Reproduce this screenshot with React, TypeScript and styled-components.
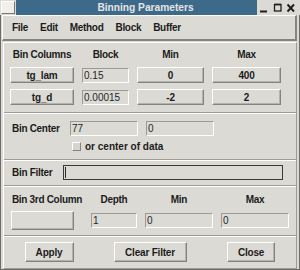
import React from "react";
import styled, { createGlobalStyle } from "styled-components";

const face = "#dcdad5";
const shade = "#9d9b96";
const deep = "#85837f";
const hilite = "#ffffff";
const ink = "#1c1c1c";

const GlobalStyle = createGlobalStyle`
  html, body { margin: 0; padding: 0; background: ${face}; }
  * { box-sizing: border-box; }
`;

const Window = styled.div`
  width: 300px;
  height: 270px;
  display: flex;
  flex-direction: column;
  background: ${face};
  color: ${ink};
  font-family: "Liberation Sans", Arial, sans-serif;
  font-size: 10px;
  font-weight: bold;
  overflow: hidden;
`;

const TitleBar = styled.div`
  height: 15px;
  flex-shrink: 0;
  display: flex;
`;

const SysBox = styled.div`
  width: 16px;
  display: flex;
  align-items: center;
  justify-content: center;
  &::after {
    content: "";
    width: 12px;
    height: 11px;
    background: #f0efec;
    border: 1px solid;
    border-color: ${hilite} #7a7874 #7a7874 ${hilite};
  }
`;

const Title = styled.div`
  flex: 1;
  background: #3e6a8a;
  color: #e4e4e4;
  font-size: 10.2px;
  line-height: 15px;
  text-align: center;
  padding-left: 18px;
  white-space: nowrap;
`;

const Controls = styled.svg`
  width: 43px;
  height: 15px;
  flex-shrink: 0;
`;

const Client = styled.div`
  flex: 1;
  display: flex;
  flex-direction: column;
  border: 1px solid #6e6c68;
  border-top: none;
  padding: 0 2px 0 1px;
`;

const MenuBar = styled.div`
  height: 26px;
  flex-shrink: 0;
  display: flex;
  align-items: center;
  gap: 12px;
  padding-left: 9px;
  border-style: solid;
  border-color: ${hilite} ${deep} ${deep} ${hilite};
  border-width: 1px 2px 2px 1px;
  letter-spacing: -0.3px;
`;

const MenuItem = styled.span`
  cursor: default;
`;

const Frame = styled.div`
  flex: 1;
  margin: 1px 0 0 1px;
  display: flex;
  flex-direction: column;
  border: 1px solid;
  border-color: ${hilite} ${shade} ${shade} ${hilite};
`;

const Groove = styled.div`
  height: 2px;
  flex-shrink: 0;
  border-top: 1px solid ${shade};
  border-bottom: 1px solid ${hilite};
`;

const ColumnsGrid = styled.div`
  display: grid;
  grid-template-columns: 64px 47px 67px 69px;
  grid-template-rows: 13px 16px 16px;
  column-gap: 8px;
  row-gap: 6px;
  padding: 5px 0 7px 6px;
  align-items: center;
`;

const Head = styled.div`
  text-align: center;
  letter-spacing: -0.3px;
  white-space: nowrap;
`;

const Label = styled.div`
  letter-spacing: -0.3px;
  white-space: nowrap;
`;

const Button = styled.button<{ $w?: number }>`
  align-self: stretch;
  justify-self: ${({ $w }) => ($w ? "start" : "stretch")};
  width: ${({ $w }) => ($w ? `${$w}px` : "auto")};
  margin: 0;
  padding: 0;
  background: ${face};
  color: ${ink};
  font: inherit;
  letter-spacing: -0.2px;
  border: 1px solid;
  border-color: ${hilite} ${deep} ${deep} ${hilite};
  box-shadow: inset -1px -1px 0 #b4b2ad;
  white-space: nowrap;
`;

const Field = styled.div`
  height: 15px;
  align-self: center;
  border: 1px solid;
  border-color: ${shade} ${hilite} ${hilite} ${shade};
  font-weight: normal;
  color: #262626;
  padding-left: 1px;
  line-height: 13px;
  white-space: nowrap;
  overflow: hidden;
`;

const CenterGrid = styled.div`
  display: grid;
  grid-template-columns: 50px 68px 68px;
  grid-template-rows: 15px 10px;
  column-gap: 8px;
  row-gap: 5px;
  padding: 7px 0 8px 8px;
  align-items: center;
`;

const CheckRow = styled.label`
  grid-column: 2 / span 2;
  display: flex;
  align-items: center;
  gap: 4px;
  padding-left: 2px;
  white-space: nowrap;
`;

const Check = styled.span`
  width: 9px;
  height: 9px;
  flex-shrink: 0;
  background: #d6d4cf;
  border: 1px solid;
  border-color: ${hilite} ${deep} ${deep} ${hilite};
`;

const FilterRow = styled.div`
  display: grid;
  grid-template-columns: 42px 1fr;
  grid-template-rows: 15px;
  column-gap: 9px;
  padding: 4px 13px 5px 8px;
  align-items: center;
`;

const FilterInput = styled.div`
  height: 15px;
  border: 1px solid #3a3a3a;
  display: flex;
  align-items: center;
  padding-left: 1px;
`;

const Caret = styled.span`
  width: 1px;
  height: 11px;
  background: #2a2a2a;
`;

const ThirdGrid = styled.div`
  display: grid;
  grid-template-columns: 72px 46px 68px 68px;
  grid-template-rows: 12px 19px;
  column-gap: 8px;
  row-gap: 6px;
  padding: 6px 0 5px 7px;
  align-items: center;
`;

const ActionRow = styled.div`
  flex: 1;
  display: grid;
  grid-template-columns: repeat(3, 101px);
  grid-template-rows: 20px;
  justify-content: center;
  justify-items: center;
  padding-top: 5px;
`;

const ActionButton = styled(Button)<{ $bw: number }>`
  width: ${({ $bw }) => $bw}px;
  justify-self: center;
`;

const menus = ["File", "Edit", "Method", "Block", "Buffer"];

const binColumns = [
  { name: "tg_lam", block: "0.15", min: "0", max: "400" },
  { name: "tg_d", block: "0.00015", min: "-2", max: "2" },
];

export default function App() {
  return (
    <>
      <GlobalStyle />
      <Window>
        <TitleBar>
          <SysBox />
          <Title>Binning Parameters</Title>
          <Controls viewBox="0 0 43 15">
            <path d="M3 11.5h7" stroke="#1e1e1e" strokeWidth="2" />
            <rect x="17.5" y="4.5" width="6.5" height="6.5" fill="none" stroke="#1e1e1e" strokeWidth="1.3" />
            <path d="M17.5 4.5h6.5" stroke="#1e1e1e" strokeWidth="1.6" />
            <path d="M30.5 4.5l6.5 7M37 4.5l-6.5 7" stroke="#1e1e1e" strokeWidth="1.9" />
          </Controls>
        </TitleBar>
        <Client>
          <MenuBar>
            {menus.map((m) => (
              <MenuItem key={m}>{m}</MenuItem>
            ))}
          </MenuBar>
          <Frame>
            <ColumnsGrid>
              <Head>Bin Columns</Head>
              <Head>Block</Head>
              <Head>Min</Head>
              <Head>Max</Head>
              {binColumns.map((c) => (
                <React.Fragment key={c.name}>
                  <Button>{c.name}</Button>
                  <Field>{c.block}</Field>
                  <Button>{c.min}</Button>
                  <Button>{c.max}</Button>
                </React.Fragment>
              ))}
            </ColumnsGrid>
            <Groove />
            <CenterGrid>
              <Label>Bin Center</Label>
              <Field>77</Field>
              <Field>0</Field>
              <CheckRow>
                <Check />
                or center of data
              </CheckRow>
            </CenterGrid>
            <Groove />
            <FilterRow>
              <Label>Bin Filter</Label>
              <FilterInput>
                <Caret />
              </FilterInput>
            </FilterRow>
            <Groove />
            <ThirdGrid>
              <Head>Bin 3rd Column</Head>
              <Head>Depth</Head>
              <Head>Min</Head>
              <Head>Max</Head>
              <Button $w={63} />
              <Field>1</Field>
              <Field>0</Field>
              <Field>0</Field>
            </ThirdGrid>
            <Groove />
            <ActionRow>
              <ActionButton $bw={49}>Apply</ActionButton>
              <ActionButton $bw={73}>Clear Filter</ActionButton>
              <ActionButton $bw={48}>Close</ActionButton>
            </ActionRow>
          </Frame>
        </Client>
      </Window>
    </>
  );
}
